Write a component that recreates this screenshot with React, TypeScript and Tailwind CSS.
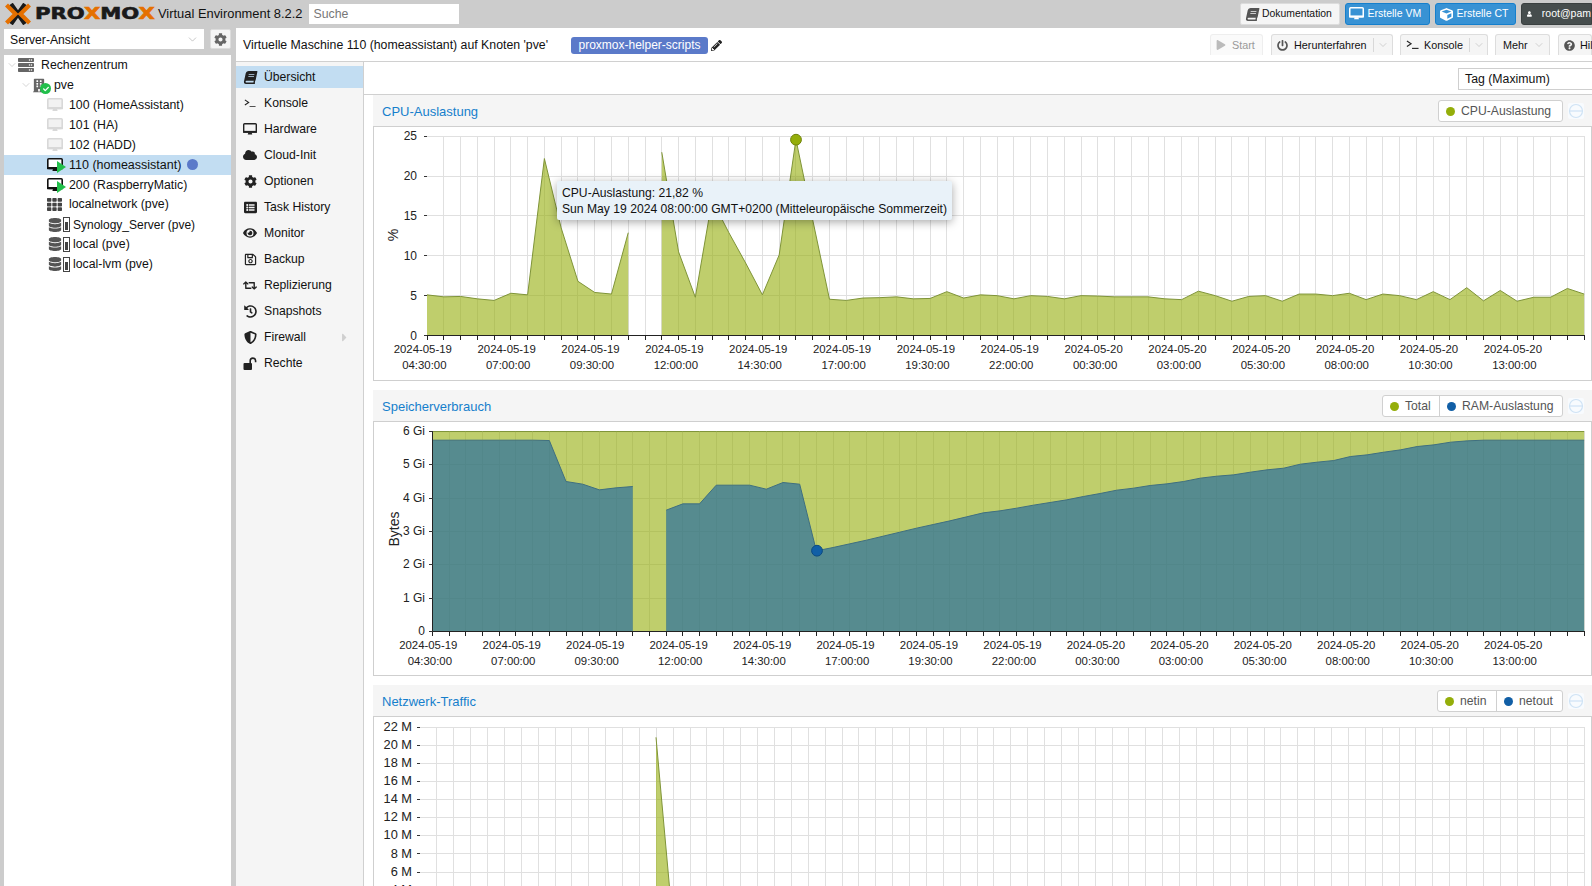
import React from "react";
import {
  FaBook, FaCloud, FaCog, FaListAlt, FaEye, FaRegSave, FaRetweet, FaHistory, FaShieldAlt,
  FaPlay, FaPowerOff, FaQuestionCircle, FaPencilAlt, FaUser, FaCube, FaServer, FaBuilding, FaTh, FaDatabase, FaCheck, FaCaretRight,
} from "react-icons/fa";
import { ChevronDown } from "lucide-react";

const cpu1 = [5.1, 4.85, 4.9, 4.6, 4.4, 5.3, 5.1, 22.2, 13.5, 6.8, 5.4, 5.2, 12.9];
const cpu2 = [23, 10.5, 4.8, 17, 12.9, 9.1, 5.1, 10.1, 24.6, 14.5, 4.55, 4.4, 4.7, 4.75, 4.85, 4.6, 4.65, 5.5, 4.7, 5.1, 5.0, 4.6, 5.0, 4.9, 4.6, 5.0, 4.95, 4.85, 4.85, 4.85, 4.6, 4.5, 5.56, 5.0, 4.3, 4.9, 5.0, 4.3, 5.2, 5.2, 5, 5.3, 4.5, 5.2, 5, 4.5, 5.5, 4.5, 6, 4.35, 5.65, 4.3, 4.8, 4.8, 5.9, 5.2];
const ram1 = [5.74, 5.74, 5.74, 5.74, 5.74, 5.74, 5.74, 5.73, 4.5, 4.42, 4.25, 4.31, 4.35];
const ram2 = [3.64, 3.83, 3.83, 4.39, 4.39, 4.39, 4.27, 4.47, 4.42, 2.42, 2.52, 2.63, 2.74, 2.86, 2.98, 3.1, 3.21, 3.32, 3.44, 3.56, 3.62, 3.7, 3.79, 3.87, 3.95, 4.05, 4.14, 4.24, 4.3, 4.38, 4.43, 4.5, 4.6, 4.66, 4.7, 4.78, 4.85, 4.9, 5.02, 5.08, 5.13, 5.25, 5.3, 5.38, 5.45, 5.55, 5.6, 5.68, 5.72, 5.74, 5.74, 5.74, 5.74, 5.74, 5.74, 5.74];

const times = ["04:30:00", "07:00:00", "09:30:00", "12:00:00", "14:30:00", "17:00:00", "19:30:00", "22:00:00", "00:30:00", "03:00:00", "05:30:00", "08:00:00", "10:30:00", "13:00:00"];
const RIGHT = 1583.5;

function Grid({ x0, step, top, bottom, ys }: { x0: number; step: number; top: number; bottom: number; ys: number[] }) {
  const n = Math.round((RIGHT - x0) / step);
  return (
    <g stroke="#e0e0e0" strokeWidth="1" shapeRendering="crispEdges">
      {ys.map((y) => <line key={y} x1={x0} x2={RIGHT} y1={y} y2={y} />)}
      {Array.from({ length: n }, (_, i) => {
        const x = x0 + step * (i + 1);
        return <line key={i} x1={x} x2={x} y1={top} y2={bottom} />;
      })}
    </g>
  );
}

function XAxis({ x0, step, base }: { x0: number; step: number; base: number }) {
  const n = Math.round((RIGHT - x0) / step);
  return (
    <g>
      <line x1={x0 - 0.5} x2={RIGHT} y1={base} y2={base} stroke="#222" strokeWidth="1" shapeRendering="crispEdges" />
      {Array.from({ length: n + 1 }, (_, i) => {
        const x = x0 + step * i;
        return <line key={i} x1={x} x2={x} y1={base} y2={base + 4} stroke="#222" strokeWidth="1" shapeRendering="crispEdges" />;
      })}
      {times.map((t, k) => {
        const c = x0 - 4.2 + step * 5 * k;
        return (
          <g key={t} fontSize="11.4" fill="#222">
            <text x={c} y={base + 17.5} textAnchor="middle">{k >= 8 ? "2024-05-20" : "2024-05-19"}</text>
            <text x={c + 1.5} y={base + 33} textAnchor="middle">{t}</text>
          </g>
        );
      })}
    </g>
  );
}

function Area({ vals, start, x0, step, base, scale, fill, line }: { vals: number[]; start: number; x0: number; step: number; base: number; scale: number; fill: string; line: string }) {
  const pts = vals.map((v, i) => `${x0 + step * (start + i)},${base - v * scale}`).join(" ");
  const a = x0 + step * start;
  const b = x0 + step * (start + vals.length - 1);
  return (
    <g>
      <polygon points={`${a},${base} ${pts} ${b},${base}`} fill={fill} fillOpacity="0.6" />
      <polyline points={pts} fill="none" stroke={line} strokeWidth="1" />
    </g>
  );
}

function YTicks({ items, x, tick, size = 12, dy = 4.2 }: { items: [string, number][]; x: number; tick: number; size?: number; dy?: number }) {
  return (
    <g>
      {items.map(([l, y]) => (
        <g key={l}>
          <text x={x} y={y + dy} textAnchor="end" fontSize={size} fill="#222">{l}</text>
          <line x1={tick - 3.5} x2={tick} y1={y} y2={y} stroke="#333" strokeWidth="1" shapeRendering="crispEdges" />
        </g>
      ))}
    </g>
  );
}

function CpuChart() {
  const x0 = 426, step = 16.77, base = 335.5, scale = 7.97;
  const ys = [25, 20, 15, 10, 5].map((v) => base - v * scale);
  return (
    <svg width="1217" height="253" viewBox="373 127 1217 253" className="block">
      <Grid x0={x0} step={step} top={ys[0]} bottom={base} ys={ys} />
      <Area vals={cpu1} start={0} x0={x0} step={step} base={base} scale={scale} fill="#94ae0a" line="#7f9438" />
      <Area vals={cpu2} start={14} x0={x0} step={step} base={base} scale={scale} fill="#94ae0a" line="#7f9438" />
      <XAxis x0={x0} step={step} base={base} />
      <YTicks items={[["25", ys[0]], ["20", ys[1]], ["15", ys[2]], ["10", ys[3]], ["5", ys[4]], ["0", base]]} x={416} tick={426} />
      <text transform="translate(396.5 235) rotate(-90)" textAnchor="middle" fontSize="14" fill="#222">%</text>
      <circle cx="795" cy="139.7" r="5.4" fill="#94ae0a" stroke="#6f8208" strokeWidth="1" />
    </svg>
  );
}

function MemChart() {
  const x0 = 431.5, step = 16.69, base = 631.5, scale = 33.33;
  const ys = [6, 5, 4, 3, 2, 1].map((v) => base - v * scale);
  const total = Array.from({ length: 70 }, () => 6);
  return (
    <svg width="1217" height="253" viewBox="373 422 1217 253" className="block">
      <Grid x0={x0} step={step} top={ys[0]} bottom={base} ys={ys} />
      <Area vals={total} start={0} x0={x0} step={step} base={base} scale={scale} fill="#94ae0a" line="#7f9438" />
      <Area vals={ram1} start={0} x0={x0} step={step} base={base} scale={scale} fill="#115fa6" line="#3f6f80" />
      <Area vals={ram2} start={14} x0={x0} step={step} base={base} scale={scale} fill="#115fa6" line="#3f6f80" />
      <line x1={x0} x2={x0} y1={ys[0]} y2={base} stroke="#222" strokeWidth="1" shapeRendering="crispEdges" />
      <XAxis x0={x0} step={step} base={base} />
      <YTicks items={[["6 Gi", ys[0]], ["5 Gi", ys[1]], ["4 Gi", ys[2]], ["3 Gi", ys[3]], ["2 Gi", ys[4]], ["1 Gi", ys[5]], ["0", base]]} x={424} tick={431.5} dy={3.4} />
      <text transform="translate(398 529) rotate(-90)" textAnchor="middle" fontSize="14" fill="#222">Bytes</text>
      <circle cx="816" cy="550.7" r="5.4" fill="#115fa6" stroke="#0c4a80" strokeWidth="1" />
    </svg>
  );
}

function NetChart() {
  const x0 = 419, step = 16.88;
  const labels: [string, number][] = [["22 M", 727.5], ["20 M", 745.5], ["18 M", 763.6], ["16 M", 781.6], ["14 M", 799.7], ["12 M", 817.8], ["10 M", 835.8], ["8 M", 853.9], ["6 M", 872], ["4 M", 890]];
  return (
    <svg width="1217" height="172" viewBox="373 717 1217 172" className="block">
      <Grid x0={x0} step={step} top={727.5} bottom={890} ys={labels.map((l) => l[1])} />
      <polygon points="655,737.3 668.3,885 672,927 655,927" fill="#94ae0a" fillOpacity="0.6" />
      <line x1="655" y1="737.3" x2="668.6" y2="888" stroke="#7f9438" strokeWidth="1" />
      <YTicks items={labels} x={411} tick={419} size={12.8} dy={3.6} />
    </svg>
  );
}

function MinusBtn() {
  return (
    <svg width="16" height="16" viewBox="0 0 16 16" className="ml-[5px] shrink-0">
      <rect width="16" height="16" rx="2" fill="#f8fbfe" />
      <circle cx="8" cy="8" r="6.5" fill="none" stroke="#cfe3f5" strokeWidth="1.2" />
      <line x1="2" x2="14" y1="8" y2="8" stroke="#cfe3f5" strokeWidth="1.2" />
    </svg>
  );
}

function LegendItem({ color, label, w, last }: { color: string; label: string; w: string; last?: boolean }) {
  return (
    <div className={`${w} h-full flex items-center pl-[7px] gap-[6px] ${last ? "" : "border-r border-[#d0d0d0]"}`}>
      <span className="w-[9px] h-[9px] rounded-full shrink-0" style={{ background: color }} />
      <span className="text-[12.2px] text-[#555] whitespace-nowrap">{label}</span>
    </div>
  );
}

function Panel({ title, legend, children, overlay, open }: { title: string; legend: React.ReactNode; children: React.ReactNode; overlay?: React.ReactNode; open?: boolean }) {
  return (
    <div className="relative mb-[9px]">
      <div className="h-[32px] bg-[#f5f5f5] border-b border-[#cfcfcf] flex items-center pl-[9px] pr-[8px]">
        <span className="text-[13px] text-[#157fcc] flex-1 pt-[1.6px]">{title}</span>
        <div className="h-[22.5px] flex bg-white border border-[#d0d0d0] rounded-[3px] mt-[1.4px]">{legend}</div>
        <MinusBtn />
      </div>
      <div className={`border-x border-[#cfcfcf] bg-white ${open ? "" : "border-b"}`}>{children}</div>
      {overlay}
    </div>
  );
}

function TreeIcon({ children, cls }: { children: React.ReactNode; cls: string }) {
  return <span className={`relative inline-flex items-center shrink-0 ${cls}`}>{children}</span>;
}

function Monitor({ color, screen, w = 16 }: { color: string; screen: string; w?: number }) {
  return (
    <svg width={w} height={w * 0.875} viewBox="0 0 16 14" className="shrink-0">
      <rect x="0.8" y="0.8" width="14.4" height="9.6" rx="1" fill={screen} stroke={color} strokeWidth="1.6" />
      <rect x="0" y="9" width="16" height="2.2" fill={color} />
      <path d="M6 11 H10 L10.6 13 H5.4 Z" fill={color} />
    </svg>
  );
}

function VmIcon({ on }: { on?: boolean }) {
  return (
    <TreeIcon cls="w-[17px] h-[16px]">
      <Monitor color={on ? "#111" : "#d8d8d8"} screen={on ? "#fff" : "#f2f2f2"} />
      {on && <span className="absolute left-[10px] top-[4px] w-0 h-0 border-y-[6.5px] border-y-transparent border-l-[9px] border-l-[#21bf4b]" />}
    </TreeIcon>
  );
}

function StorageIcon() {
  return (
    <TreeIcon cls="w-[23px] h-[16px] gap-[1px]">
      <FaDatabase size={14} color="#555" />
      <span className="w-[7px] h-[15px] border border-[#444] flex items-end justify-center p-[1px]"><span className="w-[3px] h-[8px] bg-[#444]" /></span>
    </TreeIcon>
  );
}

const Chev = () => <ChevronDown size={12} strokeWidth={1} color="#aaa" className="shrink-0" />;

function TreeRow({ icon, text, sel, pad, textCls, extra }: { icon: React.ReactNode; text: string; sel?: boolean; pad: string; textCls?: string; extra?: React.ReactNode }) {
  return (
    <div className={`h-[19.9px] flex items-center whitespace-nowrap text-[12.3px] text-[#111] ${pad} ${sel ? "bg-[#c2ddf2]" : ""}`}>
      {icon}
      <span className={textCls ?? "ml-[5px]"}>{text}</span>
      {extra}
    </div>
  );
}

function NavItem({ icon, text, sel, arrow }: { icon: React.ReactNode; text: string; sel?: boolean; arrow?: boolean }) {
  return (
    <div className={`h-[22px] flex items-center text-[12.2px] text-[#111] pl-[7px] ${sel ? "bg-[#c2ddf2]" : ""}`}>
      <span className="w-[14px] flex justify-center shrink-0">{icon}</span>
      <span className="ml-[7px] flex-1">{text}</span>
      {arrow && <FaCaretRight size={13} color="#cfcfcf" className="mr-[12px]" />}
    </div>
  );
}

function Term({ size = 14 }: { size?: number }) {
  return (
    <svg width={size} height={size * 0.72} viewBox="0 0 14 10" fill="none" stroke="#222" strokeWidth="1.2" className="shrink-0">
      <path d="M1 1 L5.5 4 L1 7" />
      <path d="M6.5 9 H13.5" />
    </svg>
  );
}

function OpenLock() {
  return (
    <svg width="14" height="13" viewBox="0 0 14 13" className="shrink-0">
      <rect x="0.5" y="6" width="8.5" height="7" rx="1" fill="#222" />
      <path d="M7.2 6.5 V3.8 a2.7 2.7 0 0 1 5.4 0 V5.2" fill="none" stroke="#222" strokeWidth="1.6" />
    </svg>
  );
}

function ToolBtn({ w, children, dim, cls = "" }: { w: string; children: React.ReactNode; dim?: boolean; cls?: string }) {
  return (
    <div className={`${w} ${cls} h-[21px] shrink-0 border-t border-x rounded-t-[3px] flex items-center text-[10.8px] ${dim ? "border-[#eee] bg-[#fafafa] text-[#999]" : "border-[#ddd] bg-[#f5f5f5] text-[#111]"}`}>
      {children}
    </div>
  );
}

const Split = () => <span className="w-px h-[14px] bg-[#d8d8d8] ml-[6px] shrink-0" />;
const Dn = ({ cls = "ml-[3px]" }: { cls?: string }) => <ChevronDown size={12} strokeWidth={1} color="#aaa" className={`shrink-0 ${cls}`} />;

function BlueBtn({ w, icon, text }: { w: string; icon: React.ReactNode; text: string }) {
  return (
    <div className={`${w} h-[21.5px] rounded-[3px] bg-[#3892d4] border border-[#157fcc] flex items-center pl-[3px] text-[10.5px] text-white whitespace-nowrap`}>
      {icon}
      <span className="ml-[3.5px]">{text}</span>
    </div>
  );
}

export default function App() {
  return (
    <div className="h-screen w-full overflow-hidden bg-[#cccccc] flex flex-col font-['Liberation_Sans',Arial,sans-serif]">
      {/* top bar */}
      <div className="h-[28px] shrink-0 flex items-center pl-[5px]">
        <svg width="26" height="22" viewBox="0 0 26 22" className="shrink-0" fill="none">
          <path d="M6 1 L20 21 M20 1 L6 21" stroke="#1a1a1a" strokeWidth="4.4" />
          <path d="M1.5 2 L10.5 11 L1.5 20 M24.5 2 L15.5 11 L24.5 20" stroke="#e57000" strokeWidth="4.2" />
        </svg>
        <span className="w-[123px] ml-[4px] shrink-0 overflow-visible whitespace-nowrap">
          <span className="inline-block origin-left scale-x-[1.32] font-['DejaVu_Sans'] font-bold text-[16px] leading-none text-[#1a1a1a] [-webkit-text-stroke-width:0.6px]">
            PRO<span className="text-[#e57000]">X</span>MO<span className="text-[#e57000]">X</span>
          </span>
        </span>
        <span className="text-[12.9px] text-[#111] whitespace-nowrap">Virtual Environment 8.2.2</span>
        <div className="ml-[6px] w-[150px] h-[20px] bg-white flex items-center pl-[5px] text-[12.3px] text-[#777]">Suche</div>
        <div className="ml-auto flex items-center gap-[5px]">
          <div className="w-[100px] h-[21.5px] bg-[#f5f5f5] border border-[#dcdcdc] rounded-[2px] flex items-center pl-[5px] text-[10.4px] text-[#111] whitespace-nowrap">
            <FaBook size={13} color="#555" className="-skew-x-12" />
            <span className="ml-[3px]">Dokumentation</span>
          </div>
          <BlueBtn w="w-[85px]" icon={<Monitor color="#fff" screen="#3892d4" w={15} />} text="Erstelle VM" />
          <BlueBtn w="w-[81px]" icon={<FaCube size={13} color="#fff" className="ml-[1px]" />} text="Erstelle CT" />
          <div className="w-[71px] h-[21.5px] bg-[#464d4d] border border-[#3a4040] rounded-l-[3px] flex items-center pl-[5px] text-[10.5px] text-white whitespace-nowrap overflow-hidden">
            <FaUser size={12} color="#fff" />
            <span className="ml-[10px]">root@pam</span>
          </div>
        </div>
      </div>

      <div className="flex-1 flex min-h-0">
        {/* left */}
        <div className="w-[236px] shrink-0 flex flex-col pl-[4px] pr-[5px] pt-px">
          <div className="flex gap-[6px] h-[20px]">
            <div className="w-[200px] bg-white flex items-center pl-[6px] pr-[5px] text-[12.2px] text-[#111]">
              <span className="flex-1 pt-[2px]">Server-Ansicht</span>
              <ChevronDown size={13} strokeWidth={1} color="#999" />
            </div>
            <div className="w-[21px] bg-[#f5f5f5] border border-[#ddd] rounded-[2px] flex items-center justify-center">
              <FaCog size={13} color="#666" />
            </div>
          </div>
          <div className="flex-1 mt-[6px] bg-white pt-[0.5px]">
            <TreeRow pad="pl-[2px]" text="Rechenzentrum" textCls="ml-[7px]" icon={<><Chev /><FaServer size={16} color="#666" /></>} />
            <TreeRow pad="pl-[16px]" text="pve" textCls="ml-[9px]" icon={<><Chev /><TreeIcon cls="w-[12px] h-[16px] ml-px"><FaBuilding size={15} color="#666" /><span className="absolute -right-[6px] top-[6px] w-[11px] h-[11px] rounded-full bg-[#21bf4b] flex items-center justify-center"><FaCheck size={6} color="#fff" /></span></TreeIcon></>} />
            <TreeRow pad="pl-[43px]" text="100 (HomeAssistant)" textCls="ml-[5px]" icon={<VmIcon />} />
            <TreeRow pad="pl-[43px]" text="101 (HA)" textCls="ml-[5px]" icon={<VmIcon />} />
            <TreeRow pad="pl-[43px]" text="102 (HADD)" textCls="ml-[5px]" icon={<VmIcon />} />
            <TreeRow sel pad="pl-[43px]" text="110 (homeassistant)" textCls="ml-[5px] text-[12.5px]" icon={<VmIcon on />} extra={<span className="ml-[6px] w-[11px] h-[11px] rounded-full bg-[#5b7ac9]" />} />
            <TreeRow pad="pl-[43px]" text="200 (RaspberryMatic)" textCls="ml-[5px]" icon={<VmIcon on />} />
            <TreeRow pad="pl-[43px]" text="localnetwork (pve)" textCls="ml-[6px]" icon={<TreeIcon cls="w-[16px] h-[16px]"><FaTh size={15} color="#444" /></TreeIcon>} />
            <TreeRow pad="pl-[44px]" text="Synology_Server (pve)" textCls="ml-[2px] text-[12px]" icon={<StorageIcon />} />
            <TreeRow pad="pl-[44px]" text="local (pve)" textCls="ml-[2px]" icon={<StorageIcon />} />
            <TreeRow pad="pl-[44px]" text="local-lvm (pve)" textCls="ml-[2px]" icon={<StorageIcon />} />
          </div>
        </div>

        {/* main */}
        <div className="flex-1 min-w-0 bg-white flex flex-col">
          <div className="h-[34px] shrink-0 border-b border-[#d0d0d0] flex items-center pl-[7px] text-[12.3px] text-[#111]">
            <span className="whitespace-nowrap pt-px">Virtuelle Maschine 110 (homeassistant) auf Knoten 'pve'</span>
            <span className="ml-[23px] mt-px h-[17px] w-[137px] bg-[#5b7ac9] rounded-[3px] text-white text-[12px] flex items-center justify-center whitespace-nowrap">proxmox-helper-scripts</span>
            <FaPencilAlt size={11} color="#222" className="ml-[3px] mt-px" />
            <div className="ml-auto flex items-end self-start mt-[6px] h-[21px]">
              <ToolBtn dim w="w-[53px]"><FaPlay size={10} color="#bbb" className="ml-[5px]" /><span className="ml-[6px]">Start</span></ToolBtn>
              <ToolBtn cls="ml-[8px]" w="w-[122px]"><FaPowerOff size={11} color="#555" className="ml-[5px]" /><span className="ml-[6px] whitespace-nowrap">Herunterfahren</span><Split /><Dn /></ToolBtn>
              <ToolBtn cls="ml-[7px]" w="w-[88px]"><span className="ml-[5px]"><Term size={13} /></span><span className="ml-[5px]">Konsole</span><Split /><Dn /></ToolBtn>
              <ToolBtn cls="ml-[7px]" w="w-[55px]"><span className="ml-[7px]">Mehr</span><Dn cls="ml-[5px]" /></ToolBtn>
              <ToolBtn cls="ml-[8px]" w="w-[34px]"><FaQuestionCircle size={11} color="#555" className="ml-[5px] shrink-0" /><span className="ml-[5px]">Hilfe</span></ToolBtn>
            </div>
          </div>

          <div className="flex-1 flex min-h-0">
            <div className="w-[128px] shrink-0 bg-[#f5f5f5] border-r border-[#d0d0d0] pt-[4px] flex flex-col gap-[4px]">
              <NavItem sel icon={<FaBook size={13} color="#222" className="-skew-x-12" />} text="Übersicht" />
              <NavItem icon={<Term size={12} />} text="Konsole" />
              <NavItem icon={<Monitor color="#222" screen="#f5f5f5" w={14} />} text="Hardware" />
              <NavItem icon={<FaCloud size={14} color="#222" />} text="Cloud-Init" />
              <NavItem icon={<FaCog size={13} color="#222" />} text="Optionen" />
              <NavItem icon={<FaListAlt size={13} color="#222" />} text="Task History" />
              <NavItem icon={<FaEye size={14} color="#222" />} text="Monitor" />
              <NavItem icon={<FaRegSave size={13} color="#222" />} text="Backup" />
              <NavItem icon={<FaRetweet size={15} color="#222" />} text="Replizierung" />
              <NavItem icon={<FaHistory size={13} color="#222" />} text="Snapshots" />
              <NavItem arrow icon={<FaShieldAlt size={13} color="#222" />} text="Firewall" />
              <NavItem icon={<OpenLock />} text="Rechte" />
            </div>
            <div className="flex-1 min-w-0 flex flex-col overflow-hidden">
              <div className="h-[33px] shrink-0 border-b border-[#d0d0d0] flex items-center justify-end">
                <div className="w-[134px] h-[22px] mt-px border-y border-l border-[#cfcfcf] flex items-center pl-[6px] text-[12.3px] text-[#111]">
                  <span className="pt-px">Tag (Maximum)</span>
                </div>
              </div>
              <div className="pl-[9px]">
                <Panel
                  title="CPU-Auslastung"
                  legend={<LegendItem last w="w-[123px]" color="#94ae0a" label="CPU-Auslastung" />}
                  overlay={
                    <div className="absolute left-[184px] top-[86px] w-[395px] h-[39px] bg-[#e9f2f9] rounded-[2px] shadow-[0_2px_10px_rgba(0,0,0,0.35)] pl-[5px] flex flex-col justify-center text-[12.15px] leading-[16px] text-[#111] whitespace-nowrap">
                      <span>CPU-Auslastung: 21,82 %</span>
                      <span>Sun May 19 2024 08:00:00 GMT+0200 (Mitteleuropäische Sommerzeit)</span>
                    </div>
                  }
                >
                  <CpuChart />
                </Panel>
                <Panel
                  title="Speicherverbrauch"
                  legend={<><LegendItem w="w-[57px]" color="#94ae0a" label="Total" /><LegendItem last w="w-[122px]" color="#115fa6" label="RAM-Auslastung" /></>}
                >
                  <MemChart />
                </Panel>
                <Panel
                  open
                  title="Netzwerk-Traffic"
                  legend={<><LegendItem w="w-[59px]" color="#94ae0a" label="netin" /><LegendItem last w="w-[65px]" color="#115fa6" label="netout" /></>}
                >
                  <NetChart />
                </Panel>
              </div>
            </div>
          </div>
        </div>
      </div>
    </div>
  );
}
